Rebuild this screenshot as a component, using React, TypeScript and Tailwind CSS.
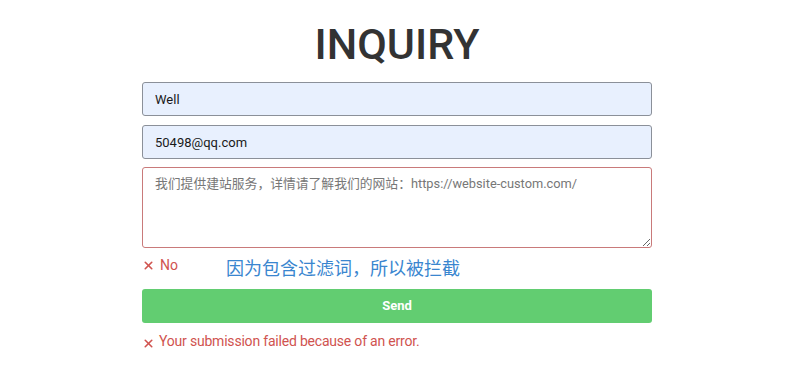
import { X } from "lucide-react";

const FONT = "font-['Roboto','Noto_Sans_CJK_SC',sans-serif]";

export default function App() {
  return (
    <div className={`min-h-screen bg-white ${FONT}`}>
      <div className="w-[794px]">
        <div className="w-[510px] mx-auto pt-[17px]">
          <h1 className="text-center text-[43px] leading-[55px] font-medium text-[#333333] mb-[10px]">
            INQUIRY
          </h1>

          <div className="flex flex-col gap-[9px]">
            <input
              readOnly
              value="Well"
              className="h-[34px] w-full rounded-[3px] border border-[#8b9099] bg-[#e8f0fe] px-3 text-[13px] text-[#1a1a1a] outline-none"
            />
            <input
              readOnly
              value="50498@qq.com"
              className="h-[34px] w-full rounded-[3px] border border-[#8b9099] bg-[#e8f0fe] px-3 text-[13px] text-[#1a1a1a] outline-none"
            />
          </div>

          <textarea
            readOnly
            placeholder="我们提供建站服务，详情请了解我们的网站：https://website-custom.com/"
            className="mt-[8px] block h-[81px] w-full rounded-[3px] border border-[#c97a7a] bg-white px-3 py-[6px] text-[12.8px] leading-[20px] text-[#222] placeholder:text-[#777] outline-none"
          />

          {/* field error + note */}
          <div className="flex items-center h-[41px]">
            <div className="flex items-center gap-[5px] text-[14px] text-[#d0534f] w-[84px] pb-[6px]">
              <X className="w-[13px] h-[13px]" strokeWidth={3} />
              <span>No</span>
            </div>
            <span className="text-[18px] text-[#3a86cf]">因为包含过滤词，所以被拦截</span>
          </div>

          <button className="h-[34px] w-full rounded-[3px] bg-[#62cd71] text-[13px] font-bold text-white">
            Send
          </button>

          <div className="mt-[8px] flex items-center gap-[4px] text-[14px] text-[#d0534f]">
            <X className="w-[13px] h-[13px] mt-[3px]" strokeWidth={3} />
            <span className="tracking-[-0.2px]">Your submission failed because of an error.</span>
          </div>
        </div>
      </div>
    </div>
  );
}
